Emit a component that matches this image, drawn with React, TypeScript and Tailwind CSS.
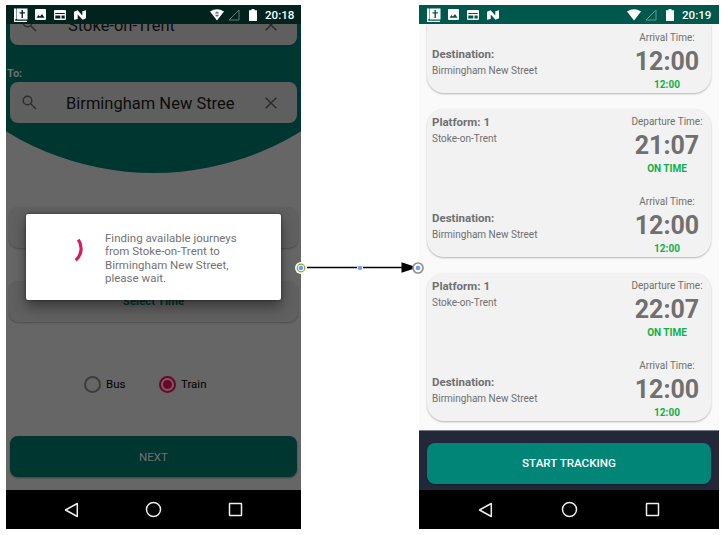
import type { ReactNode } from "react";

function StatusBar({ time, dimmed }: { time: string; dimmed?: boolean }) {
  return (
    <div
      className={`relative z-10 flex h-[19px] shrink-0 items-center text-white ${dimmed ? "bg-[#00231d] pl-[8px] pr-[6px]" : "bg-[#00574b] pl-[8px] pr-[7px]"}`}
    >
      <svg className="h-[14px] w-[14px]" viewBox="0 0 14 14" fill="currentColor">
        <path d="M0 .5h2.500V11H1.300v1.700H13V14H0zM3 .5h10.500V11.500H3z" />
        <path d="M7.500 2h1.400v2.200h2v1.300h-2V10H7.500V5.500h-2V4.200h2z" fill={dimmed ? "#00231d" : "#00574b"} />
      </svg>
      <svg className="ml-[7px] h-[11px] w-[11px]" viewBox="0 0 11 11" fill="currentColor">
        <path
          fillRule="evenodd"
          d="M1 0h9q1 0 1 1v9q0 1-1 1H1q-1 0-1-1V1q0-1 1-1zM1.500 8.700h8L7 5 5 7.500 3.500 6z"
        />
      </svg>
      <svg className="ml-[8px] h-[10px] w-[12px]" viewBox="0 0 12 10" fill="currentColor">
        <path fillRule="evenodd" d="M1 0h10q1 0 1 1v8q0 1-1 1H1q-1 0-1-1V1q0-1 1-1zM1.300 3v1.100h9.400V3zM1.300 5.400v3.200H6.300V5.400zM7.500 5.400v3.200h3.200V5.400z" />
      </svg>
      <svg className="ml-[8px] h-[10px] w-[12px]" viewBox="0 0 12 10" fill="currentColor">
        <path d="M0 1.800 3.600.3 8.300 5.600V1.200L12 .3v7.900L8.600 9.700 3.700 4.500v4.400L0 9.700z" />
      </svg>
      <svg className="ml-auto h-[12px] w-[14px]" viewBox="0 0 14 12">
        <path d="M0 2.600Q7-2.300 14 2.600L7 11.500z" fill="currentColor" />
        {dimmed && <path d="M4.800 4.500 7 2.200l2.200 2.300zM4.800 5.800h4.400L7 8z" fill="#56706c" />}
      </svg>
      <svg className="ml-[4px] h-[12px] w-[12px]" viewBox="0 0 12 12" fill="none" stroke="currentColor" opacity=".4">
        <path d="M1 11 11 1v10z" />
      </svg>
      <svg className="ml-[9px] h-[12px] w-[8px]" viewBox="0 0 8 12" fill="currentColor">
        <path d="M0 1.300h2.500V0h3v1.300H8V12H0z" />
      </svg>
      <span className="ml-[8px] w-[30px] pt-px text-[11.600px] font-medium leading-[19px]">{time}</span>
    </div>
  );
}

function NavBar({ wide }: { wide?: boolean }) {
  return (
    <div className={`flex h-[39px] shrink-0 items-center bg-black ${wide ? "pl-[59px]" : "pl-[58px]"}`}>
      <svg className="h-[16px] w-[15px]" viewBox="0 0 15 16" fill="none" stroke="#eee" strokeWidth="1.500">
        <path d="M13.300 1.500v13L1.500 8z" strokeLinejoin="round" />
      </svg>
      <svg className={`h-[17px] w-[17px] ${wide ? "ml-[68px]" : "ml-[66px]"}`} viewBox="0 0 17 17" fill="none" stroke="#eee" strokeWidth="1.500">
        <circle cx="8.500" cy="8.500" r="7" />
      </svg>
      <svg className={`h-[15px] w-[15px] ${wide ? "ml-[67px]" : "ml-[66px]"}`} viewBox="0 0 15 15" fill="none" stroke="#eee" strokeWidth="1.500">
        <rect x="1.500" y="1.500" width="12" height="12" rx=".5" />
      </svg>
    </div>
  );
}

function SearchField({ children }: { children: ReactNode }) {
  return (
    <div className="mx-[4px] flex h-[41px] shrink-0 items-center rounded-[8px] bg-[#5f5f5f] pl-[12px] pr-[20px]">
      <svg className="h-[15px] w-[15px] shrink-0" viewBox="0 0 15 15" fill="none" stroke="#2e2e2e" strokeWidth="1.500">
        <circle cx="5.500" cy="5.500" r="4.300" />
        <path d="m8.700 8.700 5.300 5.300" />
      </svg>
      <span className="ml-[29px] w-[172px] whitespace-nowrap pt-[2px] text-[16.500px] leading-[24px] text-[#0c0c0c]">
        {children}
      </span>
      <svg className="ml-auto h-[12px] w-[12px] shrink-0" viewBox="0 0 12 12" fill="none" stroke="#2a2a2a" strokeWidth="1.400">
        <path d="m.7.700 10.600 10.600M11.300.700.700 11.300" />
      </svg>
    </div>
  );
}

function SearchScreen() {
  return (
    <div className="flex h-[524px] w-[295px] flex-col">
      <StatusBar time="20:18" dimmed />
      <div className="relative flex h-[466px] flex-col overflow-hidden bg-[#666]">
        <svg className="absolute left-0 top-0 h-[150px] w-[295px]" viewBox="0 0 295 150">
          <circle cx="147.500" cy="-133" r="282" fill="#003630" />
        </svg>
        <div className="relative -mt-[20px] flex flex-col">
          <SearchField><span className="pl-[2px]">Stoke-on-Trent</span></SearchField>
          <span className="mb-px mt-[22px] pl-px text-[11px] font-bold leading-[14px] text-[#707070]">To:</span>
          <SearchField>Birmingham New Stree</SearchField>
        </div>
        <div className="mx-[3px] mt-[84px] h-[41px] shrink-0 rounded-[9px] bg-[#606060] shadow-[0_1px_2px_rgba(0,0,0,0.25)]" />
        <div className="mx-[3px] mt-[33px] flex h-[41px] shrink-0 items-center justify-center rounded-[9px] bg-[#606060] pt-px text-[11.500px] font-bold text-[#003630] shadow-[0_1px_2px_rgba(0,0,0,0.25)]">
          Select Time
        </div>
        <div className="mt-[53px] flex h-[18px] shrink-0 items-center pl-[78px] text-[11.500px] text-black">
          <span className="h-[17px] w-[17px] rounded-full border-2 border-[#3c3c3c]" />
          <span className="ml-[5px] w-[53px] pt-px">Bus</span>
          <span className="flex h-[17px] w-[17px] items-center justify-center rounded-full border-2 border-[#700328]">
            <span className="h-[9px] w-[9px] rounded-full bg-[#700328]" />
          </span>
          <span className="ml-[5px] pt-px">Train</span>
        </div>
        <div className="mx-[4px] mt-[43px] flex h-[41px] shrink-0 items-center justify-center rounded-[8px] bg-[#003630] pt-[2px] text-[11.500px] text-[#707070] shadow-[0_1px_2px_rgba(0,0,0,0.4)]">
          NEXT
        </div>
        <div className="absolute left-[20px] top-[190px] flex h-[86px] w-[255px] rounded-[2px] bg-white shadow-[0_7px_13px_rgba(0,0,0,0.4),0_0_3px_rgba(0,0,0,0.5)]">
          <svg className="ml-[46px] mt-[23px] h-[28px] w-[14px]" viewBox="0 0 14 28" fill="none" stroke="#d81b60" strokeWidth="3.200">
            <path d="M6.300 2.700A15.500 15.500 0 0 1 3.700 23.300" />
          </svg>
          <p className="ml-[19px] mt-[18px] whitespace-nowrap text-[11.500px] leading-[13.300px] text-[#737373]">
            Finding available journeys
            <br />
            from Stoke-on-Trent to
            <br />
            Birmingham New Street,
            <br />
            please wait.
          </p>
        </div>
      </div>
      <NavBar />
    </div>
  );
}

function Place({ title, name }: { title: string; name: string }) {
  return (
    <div className="-mt-px flex flex-col">
      <b className="text-[11.500px] leading-[16px]">{title}</b>
      <span className="pt-px text-[10px] leading-[16px]">{name}</span>
    </div>
  );
}

function Timing({ label, time, status }: { label: string; time: string; status: string }) {
  return (
    <div className="flex w-[88px] flex-col items-center text-[10px]">
      <span className="whitespace-nowrap leading-[14px]">{label}</span>
      <b className="text-[25px] leading-[33px]">{time}</b>
      <b className="leading-[14px] text-[#0db14b]">{status}</b>
    </div>
  );
}

function ArrivalRow() {
  return (
    <div className="flex justify-between">
      <div className="pt-[16px]">
        <Place title="Destination:" name="Birmingham New Street" />
      </div>
      <Timing label="Arrival Time:" time="12:00" status="12:00" />
    </div>
  );
}

function JourneyCard({ departure }: { departure: string }) {
  return (
    <div className="flex h-[148px] shrink-0 flex-col gap-[19px] rounded-[17px] bg-[#f2f2f2] pl-[5px] pt-[6px] shadow-[0_1px_2px_rgba(0,0,0,0.28)]">
      <div className="flex justify-between">
        <Place title="Platform: 1" name="Stoke-on-Trent" />
        <Timing label="Departure Time:" time={departure} status="ON TIME" />
      </div>
      <ArrivalRow />
    </div>
  );
}

function ResultsScreen() {
  return (
    <div className="flex h-[524px] w-[300px] flex-col">
      <StatusBar time="20:19" />
      <div className="flex h-[406px] flex-col gap-[16px] overflow-hidden bg-[#fafafa] px-[8px] text-[#707070]">
        <div className="h-[69px] shrink-0 rounded-b-[17px] bg-[#f2f2f2] pl-[5px] pt-[7px] shadow-[0_1px_2px_rgba(0,0,0,0.28)]">
          <ArrivalRow />
        </div>
        <JourneyCard departure="21:07" />
        <JourneyCard departure="22:07" />
      </div>
      <div className="flex h-[60px] flex-col border-t border-[#777b80] bg-[#22283a] px-[8px] pt-[12px]">
        <div className="flex h-[41px] items-center justify-center rounded-[8px] bg-[#008577] pt-px text-[11.600px] font-medium text-white shadow-[0_1px_2px_rgba(0,0,0,0.3)]">
          START TRACKING
        </div>
      </div>
      <NavBar wide />
    </div>
  );
}

export default function App() {
  return (
    <div className="relative flex h-[535px] w-[725px] gap-[118px] overflow-hidden bg-white pl-[6px] pt-[5px] font-['Roboto',sans-serif]">
      <SearchScreen />
      <ResultsScreen />
      <svg className="absolute left-[294px] top-[260px] h-[16px] w-[132px]" viewBox="0 0 132 16">
        <path d="M13 7.500h95" stroke="#000" strokeWidth="1.300" />
        <path d="m107.500 2.200 16 5.300-16 5.300z" />
        <circle cx="66" cy="8" r="2.700" fill="#6f9cf5" stroke="#fff" />
        <circle cx="7" cy="8" r="6" fill="#fff" />
        <circle cx="7" cy="8" r="3.800" fill="#fff" stroke="#78ae27" strokeWidth="1.200" />
        <circle cx="7" cy="8" r="2.300" fill="#6f9cf5" />
        <circle cx="124" cy="8" r="5" fill="#fff" stroke="#929292" strokeWidth="1.700" />
        <circle cx="124" cy="8" r="2.300" fill="#6f9cf5" />
      </svg>
    </div>
  );
}
